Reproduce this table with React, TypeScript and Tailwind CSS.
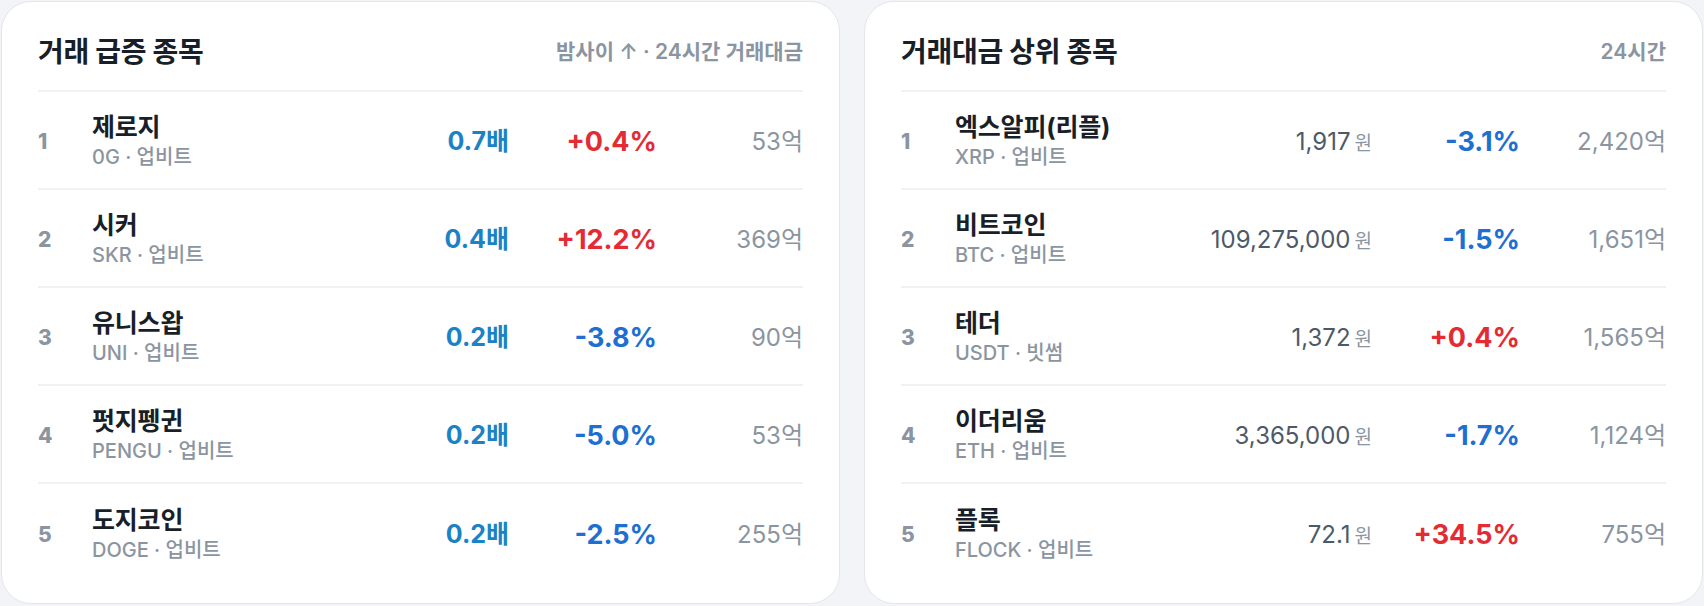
import React from 'react';

interface SurgeRow {
  name: string;
  symbol: string;
  exchange: string;
  ratio: string;
  change: number;
  volume: string;
}

interface TopRow {
  name: string;
  symbol: string;
  exchange: string;
  price: string;
  change: number;
  volume: string;
}

const surgeRows: SurgeRow[] = [
  { name: '제로지', symbol: '0G', exchange: '업비트', ratio: '0.7배', change: 0.4, volume: '53억' },
  { name: '시커', symbol: 'SKR', exchange: '업비트', ratio: '0.4배', change: 12.2, volume: '369억' },
  { name: '유니스왑', symbol: 'UNI', exchange: '업비트', ratio: '0.2배', change: -3.8, volume: '90억' },
  { name: '펏지펭귄', symbol: 'PENGU', exchange: '업비트', ratio: '0.2배', change: -5.0, volume: '53억' },
  { name: '도지코인', symbol: 'DOGE', exchange: '업비트', ratio: '0.2배', change: -2.5, volume: '255억' },
];

const topRows: TopRow[] = [
  { name: '엑스알피(리플)', symbol: 'XRP', exchange: '업비트', price: '1,917', change: -3.1, volume: '2,420억' },
  { name: '비트코인', symbol: 'BTC', exchange: '업비트', price: '109,275,000', change: -1.5, volume: '1,651억' },
  { name: '테더', symbol: 'USDT', exchange: '빗썸', price: '1,372', change: 0.4, volume: '1,565억' },
  { name: '이더리움', symbol: 'ETH', exchange: '업비트', price: '3,365,000', change: -1.7, volume: '1,124억' },
  { name: '플록', symbol: 'FLOCK', exchange: '업비트', price: '72.1', change: 34.5, volume: '755억' },
];

const fmtChange = (v: number) => `${v > 0 ? '+' : ''}${v.toFixed(1)}%`;

// 카드 공통 틀
const Card: React.FC<{ title: string; meta: React.ReactNode; children: React.ReactNode }> = ({ title, meta, children }) => (
  <section className="bg-white border border-[#e3e6ea] rounded-[30px] px-9 h-[603px]">
    <div className="flex items-center justify-between pt-[32px] pb-[20px] border-b-2 border-[#f1f2f4]">
      <h2 className="text-[28px] leading-9 font-bold text-[#191f28] tracking-[-0.3px]">{title}</h2>
      <div className="text-[21px] font-semibold text-[#8b95a1]">{meta}</div>
    </div>
    <div>{children}</div>
  </section>
);

const Row: React.FC<{
  rank: number;
  name: string;
  sub: string;
  third: React.ReactNode;
  change: number;
  volume: string;
  last: boolean;
}> = ({ rank, name, sub, third, change, volume, last }) => (
  <div
    className={`grid grid-cols-[54px_1fr_auto_148px_146px] items-center h-[98px] pt-1 ${
      last ? '' : 'border-b-2 border-[#f1f2f4]'
    }`}
  >
    <span className="text-[21px] font-extrabold text-[#8b95a1]">{rank}</span>
    <div className="flex flex-col min-w-0 -mt-1">
      <span className="text-[25px] leading-[30px] font-bold text-[#191f28] tracking-[-0.2px]">{name}</span>
      <span className="text-[20px] leading-6 mt-[3px] font-medium text-[#8b95a1]">{sub}</span>
    </div>
    <div className="text-right">{third}</div>
    <span
      className={`text-right text-[27px] font-bold ${change > 0 ? 'text-[#e42b33]' : 'text-[#1d6fd2]'}`}
    >
      {fmtChange(change)}
    </span>
    <span className="text-right text-[24px] text-[#8b95a1]">{volume}</span>
  </div>
);

export default function App() {
  return (
    <div
      className="min-h-[606px] bg-[#f3f4f7] px-px pt-px grid grid-cols-2 gap-6"
      style={{ fontFamily: 'Inter, "Noto Sans CJK KR", sans-serif' }}
    >
      <Card title="거래 급증 종목" meta={<span>밤사이 ↑ · 24시간 거래대금</span>}>
        {surgeRows.map((r, i) => (
          <Row
            key={r.symbol}
            rank={i + 1}
            name={r.name}
            sub={`${r.symbol} · ${r.exchange}`}
            third={<span className="text-[25px] font-bold text-[#1b82c6]">{r.ratio}</span>}
            change={r.change}
            volume={r.volume}
            last={i === surgeRows.length - 1}
          />
        ))}
      </Card>
      <Card title="거래대금 상위 종목" meta={<span>24시간</span>}>
        {topRows.map((r, i) => (
          <Row
            key={r.symbol}
            rank={i + 1}
            name={r.name}
            sub={`${r.symbol} · ${r.exchange}`}
            third={
              <span className="inline-flex items-baseline gap-1">
                <span className="text-[24px] text-[#4e5968]">{r.price}</span>
                <span className="text-[19px] text-[#8b95a1]">원</span>
              </span>
            }
            change={r.change}
            volume={r.volume}
            last={i === topRows.length - 1}
          />
        ))}
      </Card>
    </div>
  );
}
